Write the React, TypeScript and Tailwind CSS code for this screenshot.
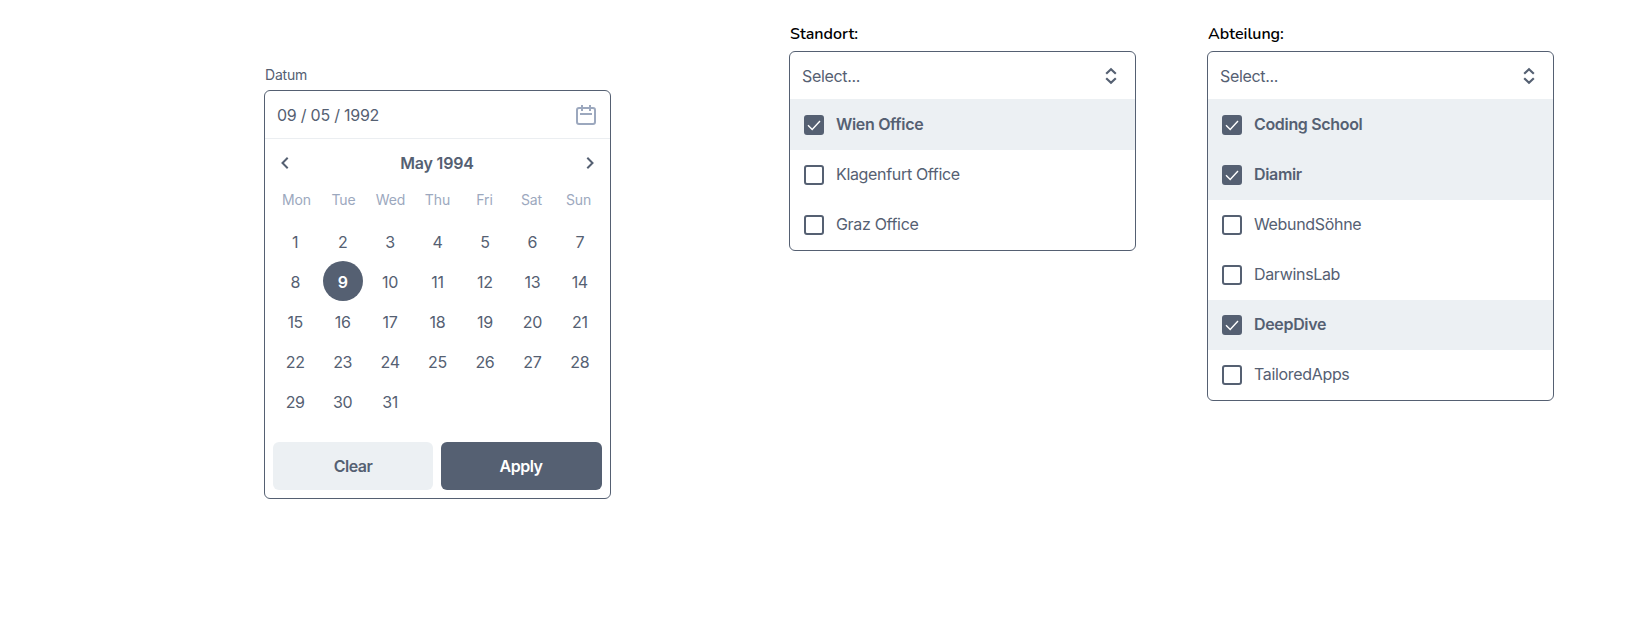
type Option = { label: string; checked?: boolean };

const weekdays = ["Mon", "Tue", "Wed", "Thu", "Fri", "Sat", "Sun"];
const days = Array.from({ length: 31 }, (_, i) => i + 1);
const selectedDay = 9;

const locations: Option[] = [
  { label: "Wien Office", checked: true },
  { label: "Klagenfurt Office" },
  { label: "Graz Office" },
];

const departments: Option[] = [
  { label: "Coding School", checked: true },
  { label: "Diamir", checked: true },
  { label: "WebundSöhne" },
  { label: "DarwinsLab" },
  { label: "DeepDive", checked: true },
  { label: "TailoredApps" },
];

function CalendarIcon() {
  return (
    <svg width="20" height="20" viewBox="0 0 20 20" fill="none" stroke="currentColor" strokeWidth="2">
      <rect x="1" y="3" width="18" height="16" rx="2" />
      <path d="M6 0v6M14 0v6M4 9h12" />
    </svg>
  );
}

function Chevron({ direction }: { direction: "left" | "right" }) {
  return (
    <svg width="8" height="12" viewBox="0 0 8 12" fill="none" stroke="currentColor" strokeWidth="2">
      <path d={direction === "left" ? "M6.7 0.8L1.5 6l5.2 5.2" : "M1.3 0.8L6.5 6l-5.2 5.2"} />
    </svg>
  );
}

function UpDownIcon() {
  return (
    <svg width="12" height="18" viewBox="0 0 12 18" fill="none" stroke="currentColor" strokeWidth="2.2">
      <path d="M1.2 6.7L6 2.3l4.8 4.4M1.2 11.3L6 15.7l4.8-4.4" />
    </svg>
  );
}

function Checkbox({ checked }: { checked?: boolean }) {
  return (
    <span className={`flex size-5 shrink-0 items-center justify-center rounded-[3px] border-2 border-[#556072] ${checked ? "bg-[#556072]" : "bg-white"}`}>
      {checked && (
        <svg className="shrink-0" width="14" height="12" viewBox="0 0 14 12" fill="none" stroke="white" strokeWidth="1.4">
          <path d="M1 6.2l4.2 4.2L13 2" />
        </svg>
      )}
    </span>
  );
}

function DatePicker() {
  return (
    <section className="mt-[66px] w-[347px]">
      <label className="flex h-6 items-start px-px text-sm leading-[18px] tracking-[-0.2px]">Datum</label>
      <div className="h-[409px] rounded-md border border-[#556072] bg-white">
        <div className="flex h-12 items-center justify-between border-b border-[#ebeef1] pr-3.5 pl-3">
          <span className="tracking-[-0.24px]">09 / 05 / 1992</span>
          <span className="text-[#9ca8be]"><CalendarIcon /></span>
        </div>
        <div className="flex h-12 items-center justify-between px-4">
          <Chevron direction="left" />
          <span className="pr-px font-semibold tracking-[-0.2px]">May 1994</span>
          <Chevron direction="right" />
        </div>
        <div className="grid grid-cols-7 px-2 text-center text-sm leading-[26px] tracking-[-0.1px] text-[#9ca8be]">
          {weekdays.map((day) => <span key={day}>{day}</span>)}
        </div>
        <div className="mt-[9px] grid grid-cols-7 px-[6.5px]">
          {days.map((day) => (
            <span
              key={day}
              className={`mx-auto flex size-10 items-center justify-center rounded-full ${day === selectedDay ? "-mt-px mb-px bg-[#556072] pt-0.5 font-semibold text-white" : ""}`}
            >
              {day}
            </span>
          ))}
        </div>
        <div className="mt-5 flex gap-2 px-2 font-semibold tracking-[-0.5px]">
          <button className="h-12 w-40 rounded-md bg-[#ecf0f3]">Clear</button>
          <button className="h-12 flex-1 rounded-md bg-[#556072] pr-px text-white">Apply</button>
        </div>
      </div>
    </section>
  );
}

function MultiSelect({ label, options }: { label: string; options: Option[] }) {
  return (
    <section className="mt-[22px] w-[347px]">
      <label className="flex h-[29px] items-start px-px font-['Nunito',sans-serif] font-semibold tracking-normal text-black">{label}</label>
      <div className="overflow-hidden rounded-md border border-[#556072] bg-white">
        <div className="flex h-12 items-center justify-between border-b border-[#ecf0f3] pr-[18px] pl-3">
          <span>Select...</span>
          <UpDownIcon />
        </div>
        {options.map((option) => (
          <div
            key={option.label}
            className={`flex h-[50px] items-center gap-3 pl-3.5 ${option.checked ? "bg-[#ecf0f3] font-semibold" : ""}`}
          >
            <Checkbox checked={option.checked} />
            <span className="pb-0.5">{option.label}</span>
          </div>
        ))}
      </div>
    </section>
  );
}

export default function App() {
  return (
    <main className="flex h-[635px] items-start bg-white pl-[264px] font-['Inter',sans-serif] text-base tracking-[-0.33px] text-[#556072] antialiased">
      <DatePicker />
      <div className="ml-[178px] flex gap-[71px]">
        <MultiSelect label="Standort:" options={locations} />
        <MultiSelect label="Abteilung:" options={departments} />
      </div>
    </main>
  );
}
